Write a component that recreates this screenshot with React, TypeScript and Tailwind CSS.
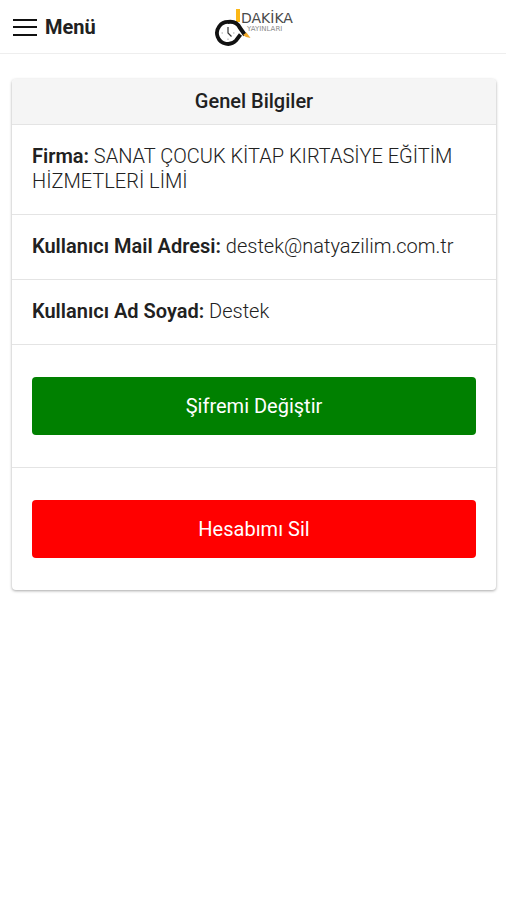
import { useState } from "react";

type RowProps = {
    label: string,
    value: string,
};

function Logo(){
    return(
        <svg viewBox="0 0 84 40" className="w-[84px] h-10" role="img" aria-label="Dakika Yayınları">
            <rect x="25" y="2" width="4" height="13" fill="#fcb817" />
            <path d="M18 15A11 11 0 1 0 25 33.500L29.500 27.500" fill="none" stroke="#111111" strokeWidth="3.800" />
            <path d="M17 15C24 14 27 17 29 21L34 28" fill="none" stroke="#111111" strokeWidth="4" />
            <path d="M32 28L35.500 25.500L39.500 31L35 30Z" fill="#f0a829" />
            <path d="M17 20V26L20.500 29.500" fill="none" stroke="#333333" strokeWidth="1.200" />
            <path d="M10.500 26H12M17 31.500V33M22 26H23.500" fill="none" stroke="#aaaaaa" strokeWidth="1" />
            <text x="30" y="16" fontSize="14" fill="#4a4a4a" fontFamily="DejaVu Sans, sans-serif">DAKİKA</text>
            <text x="36" y="24" fontSize="7" fill="#8a8a8a" fontFamily="DejaVu Sans, sans-serif">YAYINLARI</text>
        </svg>
    );
};

function Row({ label, value }: RowProps){
    return(
        <li className="border-b border-[#e4e4e4] px-5 pt-[19px] pb-5 leading-[25px] font-light">
            <span className="font-semibold">{label}:</span> {value}
        </li>
    );
};

function App(){
    const [isMenu, setIsMenu] = useState(false);
    const rows = [
        { label: "Firma", value: "SANAT ÇOCUK KİTAP KIRTASİYE EĞİTİM HİZMETLERİ LİMİ" },
        { label: "Kullanıcı Mail Adresi", value: "destek@natyazilim.com.tr" },
        { label: "Kullanıcı Ad Soyad", value: "Destek" },
    ];

    return(
        <div className="min-h-screen bg-white text-xl text-[#212121] font-[Roboto,sans-serif]">
            <header className="grid grid-cols-[1fr_auto_1fr] items-center h-[54px] px-3 border-b border-[#eeeeee]">
                <button onClick={() => setIsMenu((prev) => !prev)} aria-expanded={isMenu} className="flex gap-2 items-center w-fit font-bold cursor-pointer">
                    <svg viewBox="0 0 25 18" className="w-[25px] h-[18px]" fill="#111111" aria-hidden="true">
                        <rect x="1" y="1" width="24" height="2" />
                        <rect x="1" y="8" width="24" height="2" />
                        <rect x="1" y="16" width="24" height="2" />
                    </svg>
                    Menü
                </button>
                <Logo />
            </header>

            <main className="pl-3 pr-2.5 pt-[25px]">
                <section className="rounded-sm shadow-[0_1px_3px_rgba(0,0,0,0.35)] overflow-hidden">
                    <h1 className="h-[46px] border-b border-[#e4e4e4] bg-[#f5f5f5] text-center leading-[44px] font-medium">Genel Bilgiler</h1>

                    <ul>
                        {rows.map((row) => {
                            return <Row key={row.label} label={row.label} value={row.value} />
                        })}
                        <li className="border-b border-[#e4e4e4] px-5 py-8">
                            <button className="block w-full h-[58px] rounded bg-[#008000] text-white font-normal cursor-pointer">Şifremi Değiştir</button>
                        </li>
                        <li className="px-5 py-8">
                            <button className="block w-full h-[58px] rounded bg-[#ff0000] text-white font-normal cursor-pointer">Hesabımı Sil</button>
                        </li>
                    </ul>
                </section>
            </main>
        </div>
    );
};

export default App;
